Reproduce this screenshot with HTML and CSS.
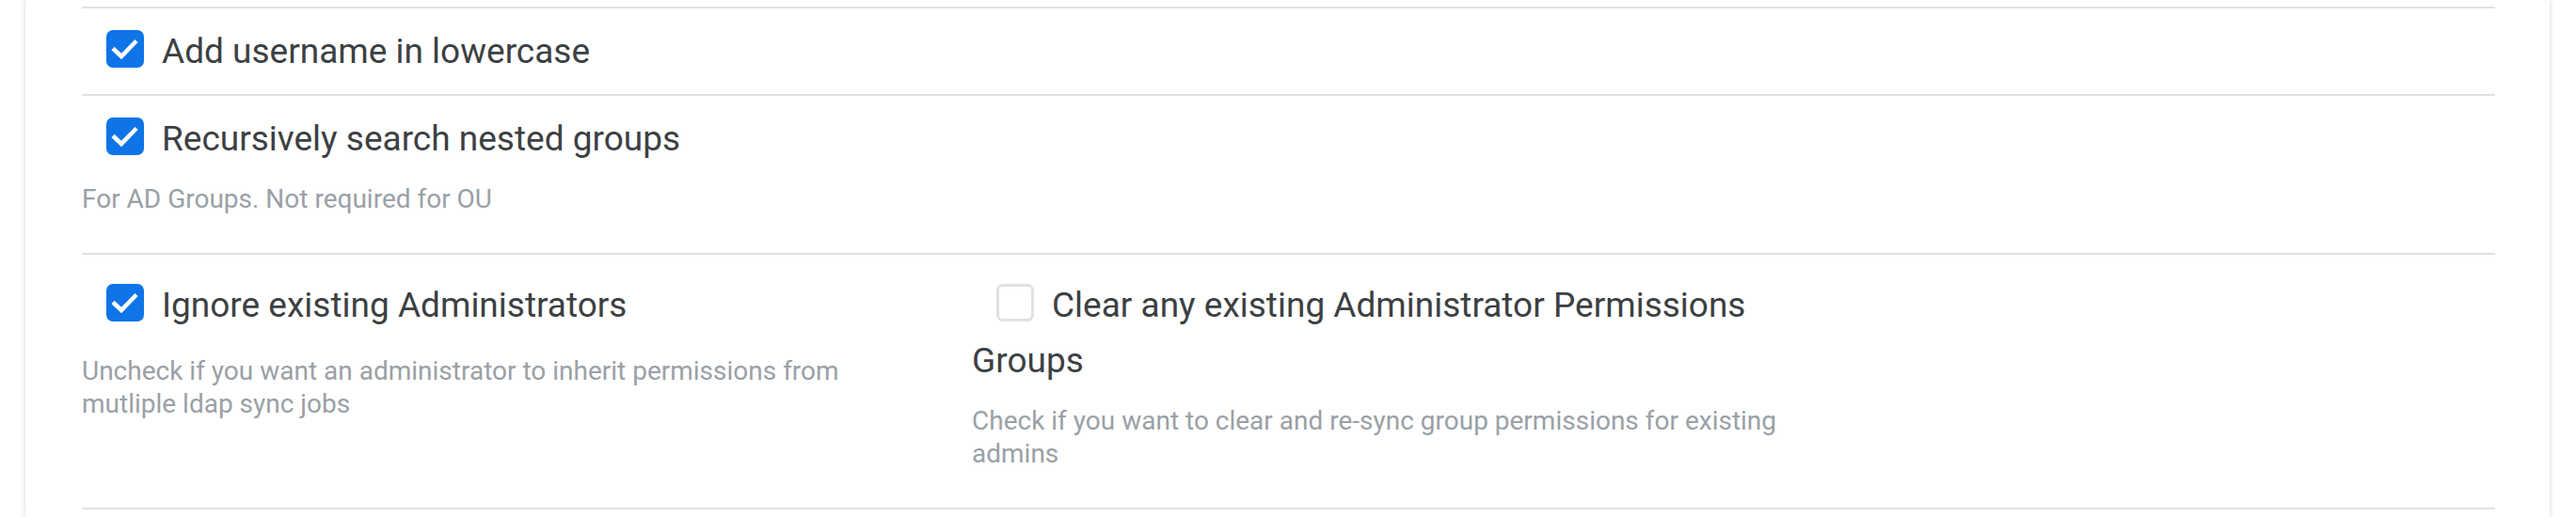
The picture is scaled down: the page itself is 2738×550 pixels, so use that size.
FILE: index.html
```html
<!DOCTYPE html>
<html lang="en">
<head>
<meta charset="utf-8">
<title>LDAP sync options</title>
<link rel="stylesheet" href="styles.css">
</head>
<body>
<div class="card">
  <div class="row row-single">
    <label class="check-label">
      <span class="box box-checked"><svg viewBox="0 0 40 40" width="40" height="40"><polyline points="7,19.5 16,28 32,11.5" fill="none" stroke="#fff" stroke-width="4.6"/></svg></span>Add username in lowercase
    </label>
  </div>
  <div class="row row-help">
    <label class="check-label">
      <span class="box box-checked"><svg viewBox="0 0 40 40" width="40" height="40"><polyline points="7,19.5 16,28 32,11.5" fill="none" stroke="#fff" stroke-width="4.6"/></svg></span>Recursively search nested groups
    </label>
    <p class="help">For AD Groups. Not required for OU</p>
  </div>
  <div class="row row-cols">
    <div class="col">
      <label class="check-label">
        <span class="box box-checked"><svg viewBox="0 0 40 40" width="40" height="40"><polyline points="7,19.5 16,28 32,11.5" fill="none" stroke="#fff" stroke-width="4.6"/></svg></span>Ignore existing Administrators
      </label>
      <p class="help help-wide">Uncheck if you want an administrator to inherit permissions from mutliple ldap sync jobs</p>
    </div>
    <div class="col">
      <label class="check-label">
        <span class="box box-empty"></span>Clear any existing Administrator Permissions Groups
      </label>
      <p class="help">Check if you want to clear and re-sync group permissions for existing admins</p>
    </div>
  </div>
  <div class="row row-end"></div>
</div>
</body>
</html>
```

FILE: styles.css
```css
html, body {
  margin: 0;
  padding: 0;
  height: 550px;
  overflow: hidden;
  background: #ffffff;
}

body {
  font-family: Roboto, "Liberation Sans", Arial, sans-serif;
}

.card {
  box-sizing: border-box;
  margin-left: 27px;
  width: 2683px;
  height: 550px;
  padding: 7px 58px 0 60px;
  background: #ffffff;
  box-shadow: 0 0 6px rgba(0, 0, 0, 0.18);
}

.row {
  border-top: 2px solid #dfe1e5;
}

.row-single {
  padding: 16px 0 16px;
}

.row-help {
  padding: 16px 0 40px;
}

.row-cols {
  display: grid;
  grid-template-columns: 900px 900px;
  column-gap: 46px;
  padding: 24px 0 39px;
}

.row-end {
  height: 0;
}

.check-label {
  display: block;
  font-size: 37px;
  line-height: 59px;
  color: #3c4043;
}

.box {
  display: inline-block;
  box-sizing: border-box;
  width: 40px;
  height: 40px;
  margin: 0 19px 0 26px;
  border-radius: 7px;
  vertical-align: -4.5px;
}

.box svg {
  display: block;
}

.box-checked {
  background: #0e74e8;
}

.box-empty {
  background: #ffffff;
  border: 3px solid #dfe1e5;
}

.help {
  margin: 16.5px 0 0;
  font-size: 28px;
  line-height: 35.5px;
  color: #9aa0a6;
}

.help-wide {
  margin-top: 22.5px;
}
```
